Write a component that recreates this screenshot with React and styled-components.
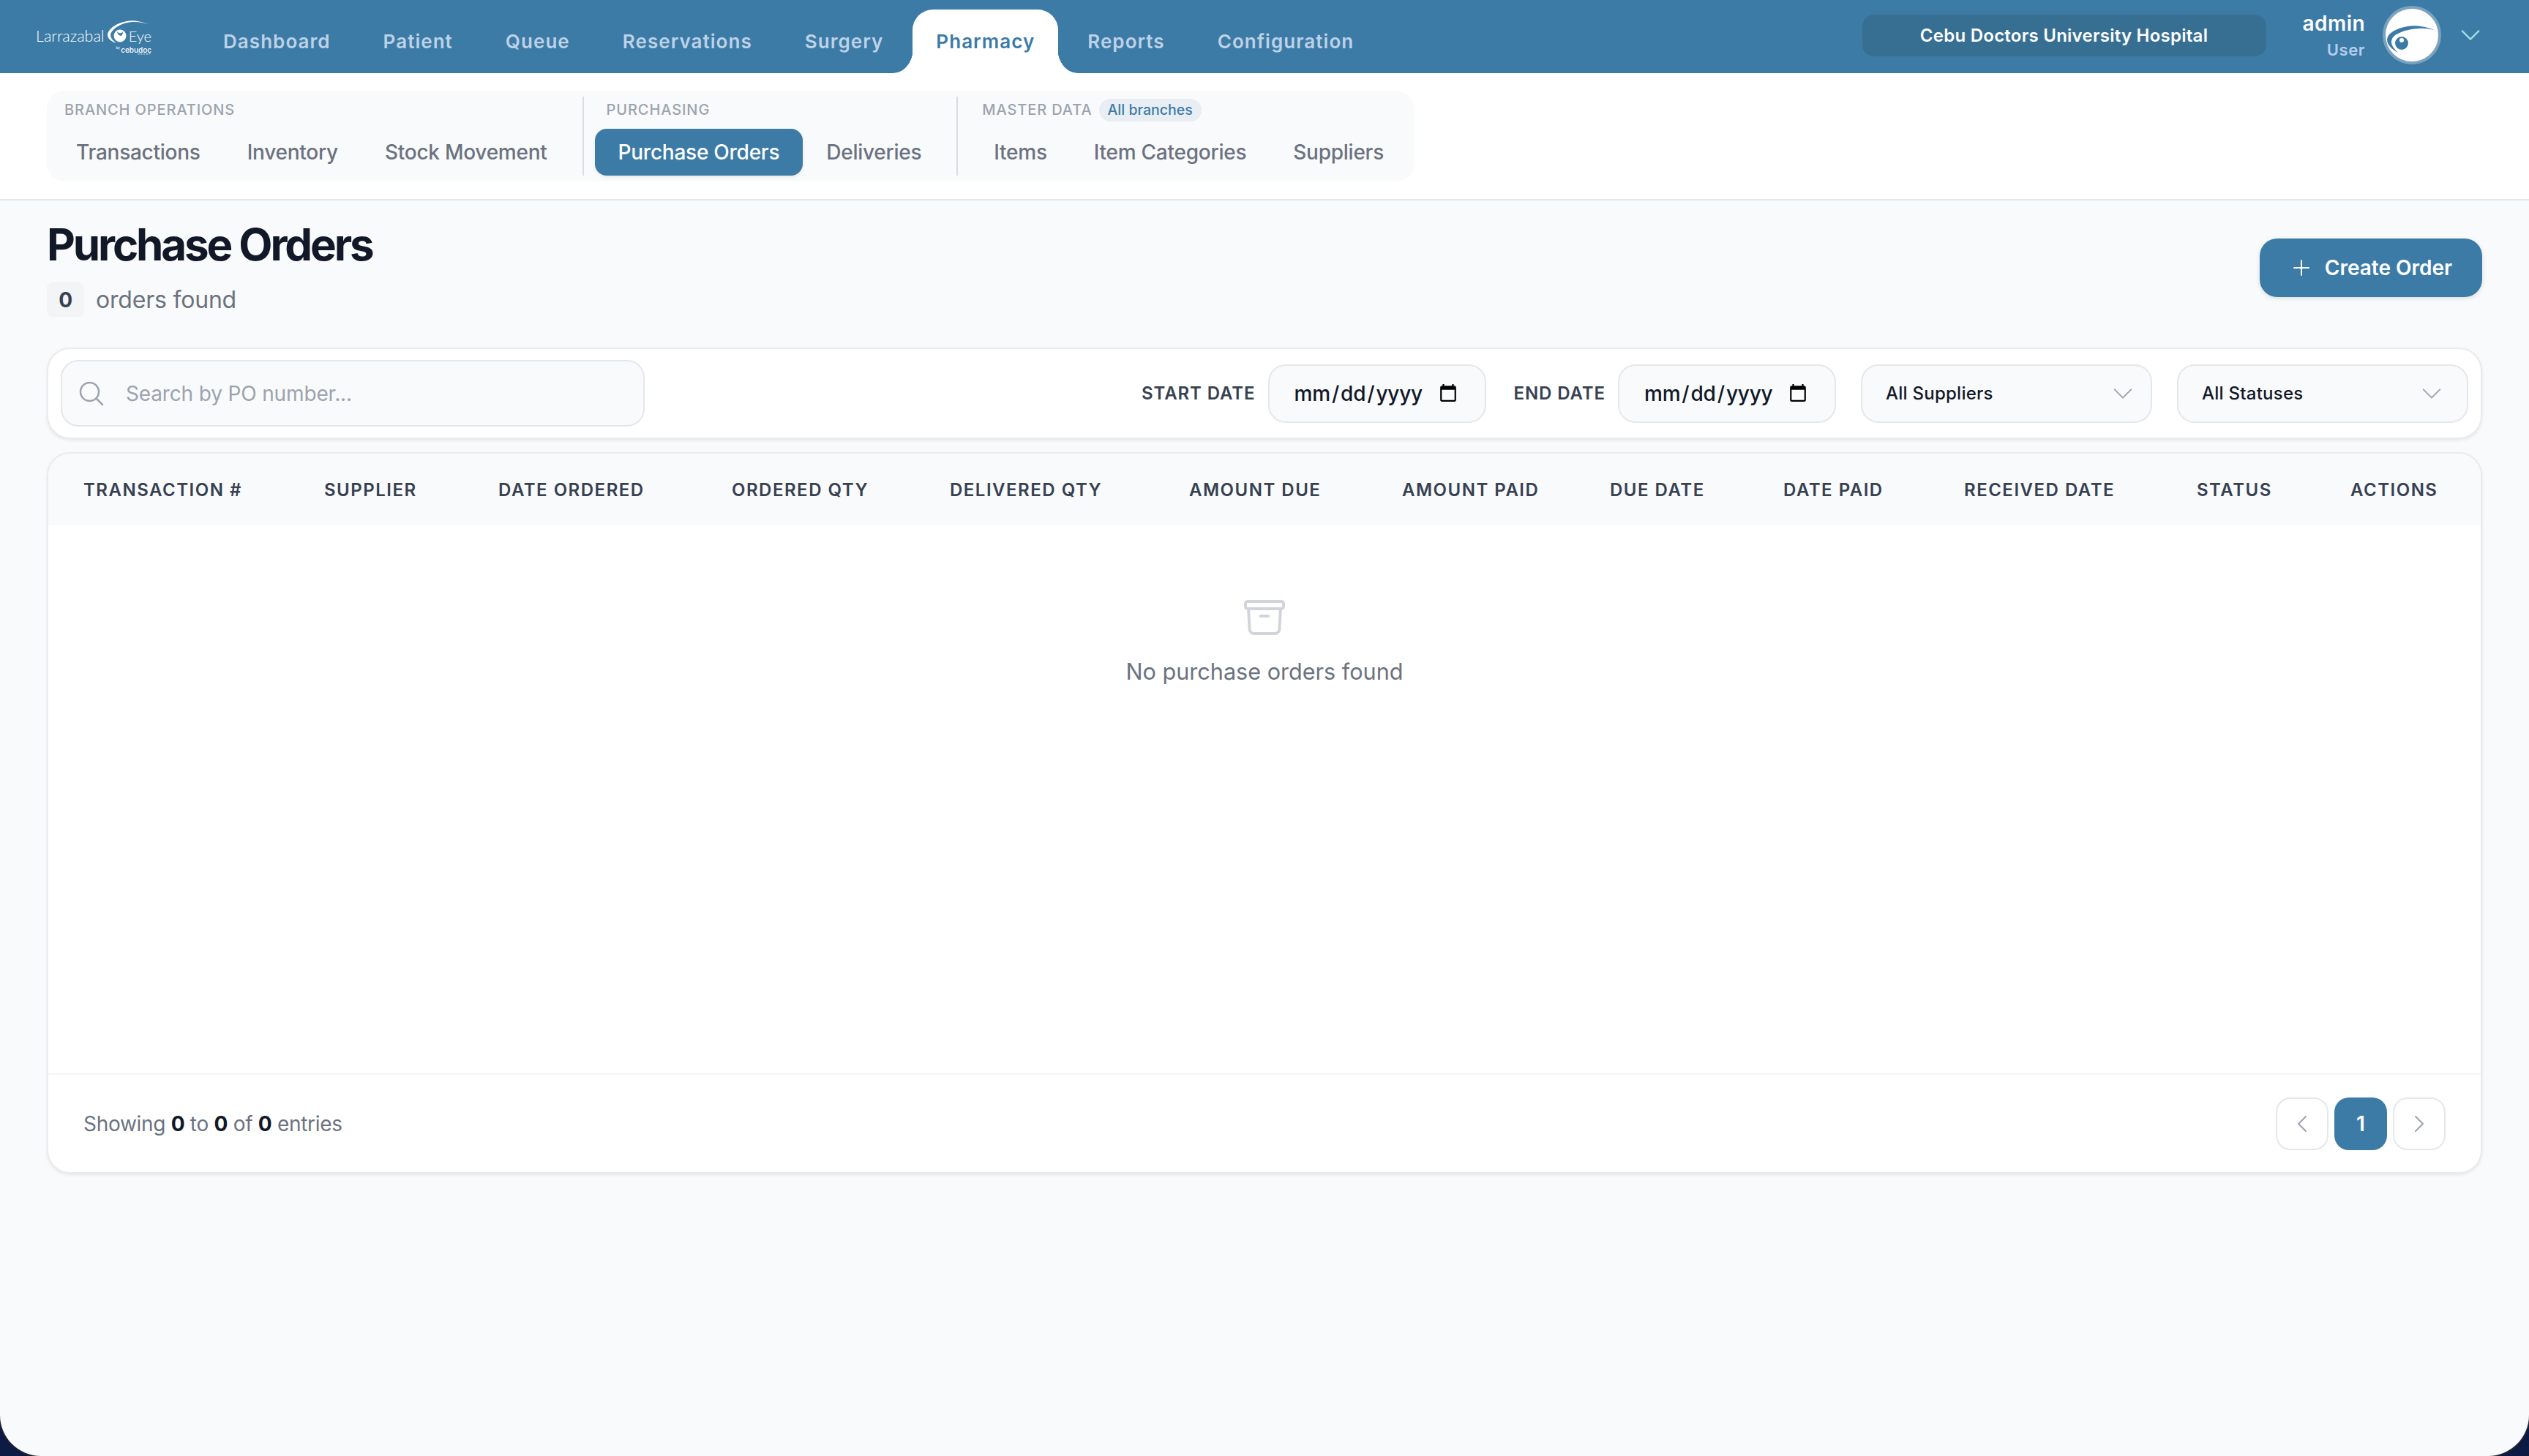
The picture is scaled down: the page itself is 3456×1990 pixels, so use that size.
import React from 'react';
import styled, {createGlobalStyle} from 'styled-components';
import {
  HiOutlineArchiveBox,
  HiOutlineChevronDown,
  HiOutlineChevronLeft,
  HiOutlineChevronRight,
  HiOutlineMagnifyingGlass,
  HiOutlinePlus,
} from 'react-icons/hi2';

const blue = '#3c7ba6';

const GlobalStyle = createGlobalStyle`
  * {
    box-sizing: border-box;
  }

  html, body {
    margin: 0;
    padding: 0;
    background: #0c1a44;
    font-family: Inter, "Liberation Sans", sans-serif;
  }
`;

const Page = styled.div`
  min-height: 1990px;
  background: #f9fafb;
  border-radius: 0 0 56px 56px;
  box-shadow: 0 0 3px 1px #2b2b2b;
  overflow: hidden;
`;

const Header = styled.header`
  height: 100px;
  background: ${blue};
  display: flex;
  align-items: flex-end;
  padding: 0 62px 0 49px;
`;

const Logo = styled.div`
  width: 158px;
  height: 46px;
  margin: 0 66px 27px 0;
  display: grid;
  grid-template-columns: 98px 30px 30px;
  grid-template-rows: 35px 10px 4px;
  color: #fff;
`;

const LogoWord = styled.span`
  align-self: end;
  justify-self: ${p => (p.$right ? 'end' : 'start')};
  font-family: Lato, sans-serif;
  font-weight: 300;
  font-size: ${p => (p.$right ? 20 : 21.5)}px;
  line-height: 26px;
`;

const LogoMark = styled.svg`
  width: 58px;
  height: 34px;
  margin-top: 1px;
  overflow: visible;
`;

const LogoSub = styled.div`
  grid-column: 1 / 4;
  justify-self: end;
  display: flex;
  align-items: flex-start;
  font-weight: 500;
  font-size: 10px;
  line-height: 12px;
  small {
    font-size: 5px;
    line-height: 6px;
    font-weight: 400;
    margin-right: 1px;
  }
`;

const LogoTiny = styled.div`
  grid-column: 1 / 4;
  justify-self: end;
  font-size: 3px;
  line-height: 4px;
  letter-spacing: 1.6px;
  text-transform: uppercase;
`;

const MainNav = styled.nav`
  display: flex;
  gap: 8px;
  height: 87px;
`;

const NavTab = styled.a`
  position: relative;
  display: flex;
  align-items: center;
  padding: 0 32px;
  height: 87px;
  font-size: 26px;
  font-weight: 600;
  letter-spacing: 1.05px;
  color: ${p => (p.$active ? blue : '#bdd2e6')};
  background: ${p => (p.$active ? '#fff' : 'transparent')};
  border-radius: 28px 28px 0 0;

  ${p => p.$active && `
    &::before, &::after {
      content: "";
      position: absolute;
      bottom: 0;
      width: 27px;
      height: 34px;
    }
    &::before {
      left: -26px;
      background: radial-gradient(ellipse 27px 34px at 0 0, transparent 98%, #fff 100%);
    }
    &::after {
      right: -26px;
      background: radial-gradient(ellipse 27px 34px at 100% 0, transparent 98%, #fff 100%);
    }
  `}
`;

const HeaderRight = styled.div`
  margin: 0 0 4px auto;
  align-self: center;
  display: flex;
  align-items: center;
`;

const BranchBox = styled.div`
  width: 552px;
  height: 57px;
  margin-right: 50px;
  display: flex;
  align-items: center;
  justify-content: center;
  background: #376f93;
  border-radius: 16px;
  color: #fff;
  font-size: 24px;
  font-weight: 600;
  letter-spacing: 0.25px;
`;

const UserInfo = styled.div`
  display: flex;
  flex-direction: column;
  align-items: flex-end;
  margin-right: 24px;
  color: #fff;
`;

const UserName = styled.span`
  font-size: 28px;
  line-height: 40px;
  font-weight: 600;
  letter-spacing: 0.45px;
`;

const UserRole = styled.span`
  font-size: 22px;
  line-height: 32px;
  font-weight: 600;
  letter-spacing: 0.55px;
  color: #b4cdee;
`;

const Avatar = styled.div`
  width: 80px;
  height: 80px;
  border-radius: 50%;
  border: 4px solid #7aa3c0;
  background: #fff;
  overflow: hidden;
  svg {
    display: block;
  }
`;

const MenuChevron = styled(HiOutlineChevronDown)`
  width: 36px;
  height: 36px;
  margin-left: 22px;
  color: #9fe2dc;
`;

const SubBar = styled.div`
  height: 174px;
  padding: 24px 64px 0;
  background: #fff;
  border-bottom: 2px solid #e5e7eb;
`;

const SubNav = styled.div`
  display: inline-flex;
  height: 124px;
  padding: 8px;
  background: #f9fafb;
  border-radius: 24px;
`;

const SubGroup = styled.div`
  display: flex;
  flex-direction: column;
  gap: 8px;
  padding: 0 ${p => (p.$last ? '1px' : '16px')} 0 ${p => (p.$first ? '0' : p.$last ? '17px' : '15px')};
  border-right: ${p => (p.$last ? 'none' : '2px solid #d9dce1')};
`;

const GroupLabel = styled.div`
  height: 36px;
  padding-left: 16px;
  display: flex;
  align-items: center;
  gap: 9px;
  font-size: 20px;
  font-weight: 500;
  letter-spacing: 0.9px;
  text-transform: uppercase;
  color: #9ca3af;
`;

const Chip = styled.span`
  height: 31px;
  padding: 0 12px;
  display: flex;
  align-items: center;
  border-radius: 16px;
  background: #e8eef3;
  color: ${blue};
  font-size: 19.5px;
  letter-spacing: 0;
  text-transform: none;
`;

const SubLinks = styled.div`
  display: flex;
`;

const SubLink = styled.a`
  height: 64px;
  padding: 0 32px;
  display: flex;
  align-items: center;
  border-radius: 16px;
  font-size: 28px;
  font-weight: 500;
  letter-spacing: -0.25px;
  color: ${p => (p.$active ? '#fff' : '#6b7280')};
  background: ${p => (p.$active ? blue : 'transparent')};
  box-shadow: ${p => (p.$active ? '0 2px 4px rgba(0,0,0,.08)' : 'none')};
`;

const Main = styled.main`
  padding: 24px 64px 0;
`;

const TitleRow = styled.div`
  display: flex;
  justify-content: space-between;
  align-items: flex-start;
`;

const Title = styled.h1`
  margin: 0 0 16px;
  font-size: 60px;
  line-height: 72px;
  font-weight: 700;
  letter-spacing: -3.1px;
  color: #111827;
`;

const CountRow = styled.div`
  display: flex;
  align-items: center;
  gap: 16px;
  font-size: 32px;
  letter-spacing: -0.2px;
  color: #6b7280;
`;

const CountBadge = styled.span`
  width: 51px;
  height: 47px;
  display: flex;
  align-items: center;
  justify-content: center;
  background: #f3f4f6;
  border-radius: 8px;
  font-size: 28px;
  font-weight: 700;
  color: #374151;
`;

const CreateButton = styled.button`
  margin-top: 28px;
  width: 304px;
  height: 80px;
  display: flex;
  align-items: center;
  justify-content: center;
  gap: 16px;
  border: none;
  border-radius: 24px;
  background: ${blue};
  color: #fff;
  font: 600 28px Inter, sans-serif;
  box-shadow: 0 2px 6px rgba(0,0,0,.12);
  svg {
    width: 32px;
    height: 32px;
  }
`;

const FilterBar = styled.div`
  margin-top: 42px;
  height: 125px;
  padding: 0 17px;
  display: flex;
  align-items: center;
  background: #fff;
  border: 2px solid #e9ebee;
  border-radius: 32px;
  box-shadow: 0 2px 4px rgba(0,0,0,.08);
`;

const SearchBox = styled.div`
  width: 798px;
  height: 91px;
  margin-right: auto;
  padding: 0 20px;
  display: flex;
  align-items: center;
  gap: 27px;
  background: #f9fafb;
  border: 2px solid #e5e7eb;
  border-radius: 24px;
  color: #9ca3af;
  font-size: 28px;
  letter-spacing: -0.15px;
  svg {
    width: 40px;
    height: 40px;
  }
`;

const DateLabel = styled.label`
  margin: 0 17px 0 ${p => (p.$wide ? '38px' : '0')};
  font-size: 24px;
  font-weight: 600;
  letter-spacing: 0.9px;
  text-transform: uppercase;
  color: #374151;
`;

// native date field, zoomed so its picker glyph gets the 2x size
const DateField = styled.input`
  zoom: 2;
  width: 149px;
  height: 40px;
  padding: 0 16px;
  background: #f9fafb;
  border: 1px solid #e5e7eb;
  border-radius: 12px;
  font: 500 14px Inter, sans-serif;
  letter-spacing: -0.1px;
  color: #111827;
  outline: none;
`;

const SelectBox = styled.div`
  width: 398px;
  height: 80px;
  margin-left: 34px;
  padding: 0 ${p => p.$chevronGap}px 0 32px;
  display: flex;
  align-items: center;
  justify-content: space-between;
  background: #f9fafb;
  border: 2px solid #e5e7eb;
  border-radius: 24px;
  font-size: 24px;
  font-weight: 500;
  letter-spacing: 0.25px;
  color: #111827;
  svg {
    width: 36px;
    height: 36px;
    color: #9ca3af;
  }
`;

const TableCard = styled.div`
  margin-top: 18px;
  background: #fff;
  border: 2px solid #e9ebee;
  border-radius: 32px;
  box-shadow: 0 2px 4px rgba(0,0,0,.08);
  overflow: hidden;
`;

const TableHead = styled.div`
  height: 98px;
  display: grid;
  grid-template-columns: 329px 238px 319px 298px 327px 291px 284px 237px 247px 318px 210px 1fr;
  align-items: center;
  background: #f9fafb;
`;

const HeadCell = styled.div`
  padding-left: 48px;
  font-size: 24px;
  font-weight: 600;
  letter-spacing: 1.5px;
  text-transform: uppercase;
  white-space: nowrap;
  color: #374151;
`;

const EmptyArea = styled.div`
  height: 749px;
  padding-top: 94px;
  display: flex;
  flex-direction: column;
  align-items: center;
  gap: 23px;
  font-size: 30.6px;
  color: #6b7280;
  svg {
    width: 64px;
    height: 64px;
    color: #d1d5db;
  }
`;

const Footer = styled.div`
  height: 135px;
  padding: 0 48px;
  display: flex;
  align-items: center;
  justify-content: space-between;
  border-top: 2px solid #f3f4f6;
`;

const ShowingText = styled.div`
  font-size: 28px;
  letter-spacing: -0.3px;
  color: #6b7280;
  b {
    font-weight: 700;
    color: #111827;
  }
`;

const Pager = styled.div`
  display: flex;
  gap: 8px;
`;

const PageButton = styled.button`
  width: 72px;
  height: 72px;
  display: flex;
  align-items: center;
  justify-content: center;
  border-radius: 20px;
  border: ${p => (p.$active ? 'none' : '2px solid #e5e7eb')};
  background: ${p => (p.$active ? blue : '#fff')};
  color: ${p => (p.$active ? '#fff' : '#9ca3af')};
  font: 600 28px Inter, sans-serif;
  svg {
    width: 32px;
    height: 32px;
  }
`;

const navItems = ['Dashboard', 'Patient', 'Queue', 'Reservations', 'Surgery', 'Pharmacy', 'Reports', 'Configuration'];

const columns = [
  'Transaction #', 'Supplier', 'Date Ordered', 'Ordered Qty', 'Delivered Qty', 'Amount Due',
  'Amount Paid', 'Due Date', 'Date Paid', 'Received Date', 'Status', 'Actions',
];

const LogoSwoosh = () => (
  <LogoMark viewBox="0 0 58 34" fill="#fff">
    <path d="M56 5C44 1 34 -1 26 1 10 4 0 13 0 20 0 25 6 29 12 31 8 28 4 24 4 20 5 12 18 3 34 2 42 1.5 50 3 56 5Z" />
    <circle cx="17" cy="21" r="8.5" />
    <path fill={blue} d="M13 15a4.5 4.5 0 0 0 8 0 8 8 0 0 1-2 6 6 6 0 0 1-6-6Z" />
  </LogoMark>
);

const EyeMark = () => (
  <svg width="72" height="72" viewBox="0 0 72 72">
    <path
      fill={blue}
      d="M69 30C55 24 40 22 30 24 14 27 3 33 2 42 2 50 10 56 17 60 10 53 6 47 9 41 13 33 30 28 45 27 55 26 63 28 69 30Z"
    />
    <circle cx="22" cy="47" r="9" fill={blue} />
    <circle cx="22" cy="43" r="3" fill="#fff" />
  </svg>
);

export default function App() {
  return (
    <Page>
      <GlobalStyle />
      <Header>
        <Logo>
          <LogoWord>Larrazabal</LogoWord>
          <LogoSwoosh />
          <LogoWord $right>Eye</LogoWord>
          <LogoSub><small>by</small>cebudoc</LogoSub>
          <LogoTiny>group</LogoTiny>
        </Logo>
        <MainNav>
          {navItems.map(name => (
            <NavTab key={name} $active={name === 'Pharmacy'}>{name}</NavTab>
          ))}
        </MainNav>
        <HeaderRight>
          <BranchBox>Cebu Doctors University Hospital</BranchBox>
          <UserInfo>
            <UserName>admin</UserName>
            <UserRole>User</UserRole>
          </UserInfo>
          <Avatar><EyeMark /></Avatar>
          <MenuChevron strokeWidth={1.5} />
        </HeaderRight>
      </Header>

      <SubBar>
        <SubNav>
          <SubGroup $first>
            <GroupLabel>Branch Operations</GroupLabel>
            <SubLinks>
              <SubLink>Transactions</SubLink>
              <SubLink>Inventory</SubLink>
              <SubLink>Stock Movement</SubLink>
            </SubLinks>
          </SubGroup>
          <SubGroup>
            <GroupLabel>Purchasing</GroupLabel>
            <SubLinks>
              <SubLink $active>Purchase Orders</SubLink>
              <SubLink>Deliveries</SubLink>
            </SubLinks>
          </SubGroup>
          <SubGroup $last>
            <GroupLabel>Master Data <Chip>All branches</Chip></GroupLabel>
            <SubLinks>
              <SubLink>Items</SubLink>
              <SubLink>Item Categories</SubLink>
              <SubLink>Suppliers</SubLink>
            </SubLinks>
          </SubGroup>
        </SubNav>
      </SubBar>

      <Main>
        <TitleRow>
          <div>
            <Title>Purchase Orders</Title>
            <CountRow><CountBadge>0</CountBadge> orders found</CountRow>
          </div>
          <CreateButton><HiOutlinePlus strokeWidth={1.5} /> Create Order</CreateButton>
        </TitleRow>

        <FilterBar>
          <SearchBox>
            <HiOutlineMagnifyingGlass strokeWidth={1.5} />
            Search by PO number...
          </SearchBox>
          <DateLabel>Start Date</DateLabel>
          <DateField type="date" />
          <DateLabel $wide>End Date</DateLabel>
          <DateField type="date" />
          <SelectBox $chevronGap={20}>All Suppliers <HiOutlineChevronDown strokeWidth={1.3} /></SelectBox>
          <SelectBox $chevronGap={30}>All Statuses <HiOutlineChevronDown strokeWidth={1.3} /></SelectBox>
        </FilterBar>

        <TableCard>
          <TableHead>
            {columns.map(c => <HeadCell key={c}>{c}</HeadCell>)}
          </TableHead>
          <EmptyArea>
            <HiOutlineArchiveBox strokeWidth={1.5} />
            No purchase orders found
          </EmptyArea>
          <Footer>
            <ShowingText>Showing <b>0</b> to <b>0</b> of <b>0</b> entries</ShowingText>
            <Pager>
              <PageButton><HiOutlineChevronLeft strokeWidth={1.5} /></PageButton>
              <PageButton $active>1</PageButton>
              <PageButton><HiOutlineChevronRight strokeWidth={1.5} /></PageButton>
            </Pager>
          </Footer>
        </TableCard>
      </Main>
    </Page>
  );
}
